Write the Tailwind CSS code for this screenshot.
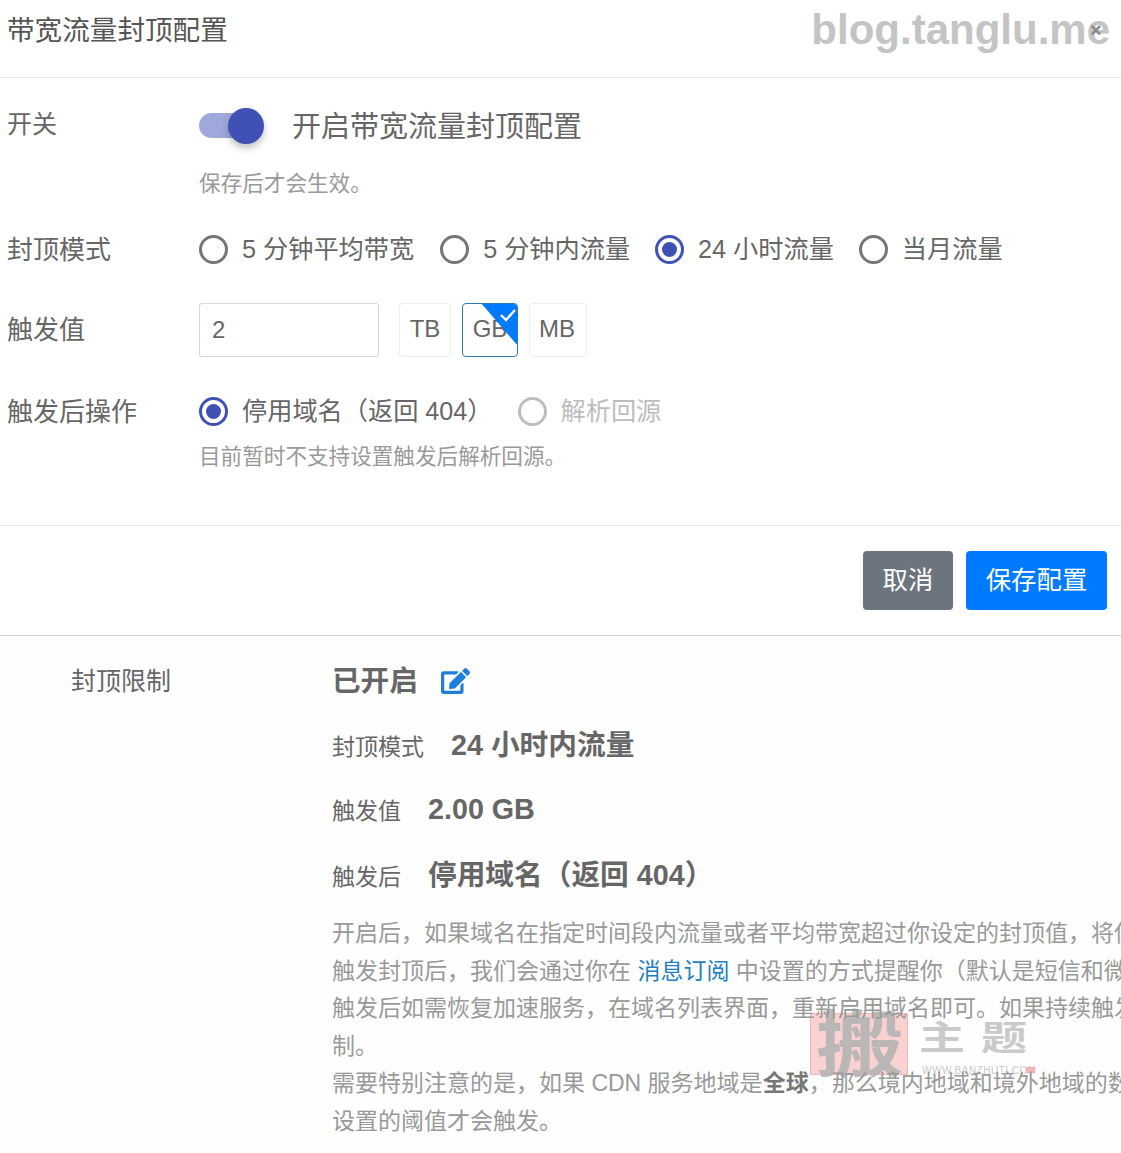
<!DOCTYPE html>
<html lang="zh-CN">
<head>
<meta charset="utf-8">
<script src="https://cdn.jsdelivr.net/npm/@tailwindcss/browser@4"></script>
<title>带宽流量封顶配置</title>
</head>
<body class="bg-white">
<div class="relative w-[1121px] h-[1153px] overflow-hidden bg-[#fefefe] text-[#666] font-['Liberation_Sans','Noto_Sans_CJK_SC',sans-serif]">

  <header class="relative h-[78px] border-b border-[#e6e6e6] flex items-center justify-between pl-[7px] pr-[11px] bg-white">
    <h1 class="text-[27.6px] leading-none text-[#555] pb-[15px] whitespace-nowrap">带宽流量封顶配置</h1>
    <span class="text-[42px] leading-none font-bold text-[#c4c4c4] pb-[17px] whitespace-nowrap">blog.tanglu.me</span>
    <span class="absolute left-[1090px] top-[20px] text-[20px] leading-none font-bold text-[#8a8a8a]">×</span>
  </header>

  <section class="h-[448px] border-b border-[#e6e6e6] bg-white pl-[7px] pt-[21px]">
    <div class="flex items-center h-[54px]">
      <label class="w-[192px] text-[25px] pb-[3px]">开关</label>
      <span class="relative block w-[65px] h-[36px]">
        <span class="absolute left-0 top-[5px] w-[58px] h-[25px] rounded-full bg-[#9fa8da]"></span>
        <span class="absolute left-[29px] top-0 w-[36px] h-[36px] rounded-full bg-[#3f51b5] shadow-[0_4px_7px_rgba(0,0,0,0.25)]"></span>
      </span>
      <span class="ml-[28px] text-[29px] leading-none pt-[2px]">开启带宽流量封顶配置</span>
    </div>
    <p class="ml-[192px] mt-[16px] text-[21.6px] leading-[30px] text-[#999] whitespace-nowrap">保存后才会生效。</p>

    <div class="flex items-center h-[40px] mt-[31px]">
      <label class="w-[192px] text-[26px]">封顶模式</label>
      <div class="flex items-center text-[25.2px] whitespace-nowrap">
        <span class="w-[29px] h-[29px] rounded-full border-[3px] border-[#757575]"></span>
        <span class="ml-[14px] mr-[26px]">5 分钟平均带宽</span>
        <span class="w-[29px] h-[29px] rounded-full border-[3px] border-[#757575]"></span>
        <span class="ml-[14px] mr-[25px]">5 分钟内流量</span>
        <span class="w-[29px] h-[29px] rounded-full border-[3px] border-[#3f51b5] flex items-center justify-center"><span class="w-[15px] h-[15px] rounded-full bg-[#3f51b5]"></span></span>
        <span class="ml-[14px] mr-[25px]">24 小时流量</span>
        <span class="w-[29px] h-[29px] rounded-full border-[3px] border-[#757575]"></span>
        <span class="ml-[14px]">当月流量</span>
      </div>
    </div>

    <div class="flex items-center h-[54px] mt-[33px]">
      <label class="w-[192px] text-[26px]">触发值</label>
      <div class="flex items-center text-[24px]">
        <div class="w-[180px] h-[54px] border border-[#d6d6d6] rounded-[3px] pl-[12px] flex items-center bg-white">2</div>
        <div class="ml-[20px] w-[52px] h-[54px] border border-[#eeeeee] rounded-[4px] flex items-center justify-center pb-[2px]">TB</div>
        <div class="relative ml-[11px] w-[56px] h-[54px] border border-[#2b79b5] rounded-[4px] flex items-center justify-center overflow-hidden pb-[2px]">GB
          <svg class="absolute -right-px -top-px" width="37" height="43" viewBox="0 0 37 43"><polygon points="0,0 37,0 37,43" fill="#007bff"/><path d="M20 12l5 5 9-10" fill="none" stroke="#fff" stroke-width="2.4"/></svg>
        </div>
        <div class="ml-[11px] w-[58px] h-[54px] border border-[#eeeeee] rounded-[4px] flex items-center justify-center pb-[2px] pr-[2px]">MB</div>
      </div>
    </div>

    <div class="flex items-center h-[40px] mt-[35px]">
      <label class="w-[192px] text-[26px]">触发后操作</label>
      <div class="flex items-center text-[25.2px] whitespace-nowrap">
        <span class="w-[29px] h-[29px] rounded-full border-[3px] border-[#3f51b5] flex items-center justify-center"><span class="w-[15px] h-[15px] rounded-full bg-[#3f51b5]"></span></span>
        <span class="ml-[14px] mr-[25px]">停用域名（返回 404）</span>
        <span class="w-[29px] h-[29px] rounded-full border-[3px] border-[#bdbdbd]"></span>
        <span class="ml-[14px] text-[#bdbdbd]">解析回源</span>
      </div>
    </div>
    <p class="ml-[192px] mt-[10px] text-[21.6px] leading-[30px] text-[#999] whitespace-nowrap">目前暂时不支持设置触发后解析回源。</p>
  </section>

  <div class="h-[110px] border-b border-[#cfcfcf] bg-white flex items-center justify-end gap-[13px] pr-[14px] pb-[1px] text-white text-[25.4px]">
    <button class="w-[90px] h-[59px] rounded-[4px] bg-[#6c757d]">取消</button>
    <button class="w-[141px] h-[59px] rounded-[4px] bg-[#007bff]">保存配置</button>
  </div>

  <section class="relative z-10 flex pt-[26px]">
    <div class="w-[332px] pl-[71px] text-[25px] leading-[38px] shrink-0 whitespace-nowrap">封顶限制</div>
    <div class="min-w-0 flex-1">
      <div class="flex items-center h-[38px]">
        <strong class="text-[28.6px] font-bold">已开启</strong>
        <svg class="ml-[23px]" width="29" height="26" viewBox="0 0 576 512" fill="#1e7fd8"><path d="M402.6 83.2l90.2 90.2c3.8 3.8 3.8 10 0 13.8L274.4 405.6l-92.8 10.3c-12.4 1.4-22.9-9.1-21.5-21.5l10.3-92.8L388.8 83.2c3.8-3.8 10-3.8 13.8 0zm162-22.9l-48.8-48.8c-15.2-15.2-39.9-15.2-55.2 0l-35.4 35.4c-3.8 3.8-3.8 10 0 13.8l90.2 90.2c3.8 3.8 10 3.8 13.8 0l35.4-35.4c15.2-15.3 15.2-40 0-55.2zM384 346.2V448H64V128h229.8c3.2 0 6.2-1.3 8.5-3.5l40-40c7.6-7.6 2.2-20.5-8.5-20.5H48C21.5 64 0 85.5 0 112v352c0 26.5 21.5 48 48 48h352c26.5 0 48-21.5 48-48V306.2c0-10.7-12.9-16-20.5-8.5l-40 40c-2.2 2.3-3.5 5.3-3.5 8.5z"/></svg>
      </div>
      <div class="flex items-center h-[38px] mt-[27px] whitespace-nowrap">
        <span class="text-[23px] w-[119px] pt-[2px]">封顶模式</span>
        <strong class="text-[28.7px] font-bold">24 小时内流量</strong>
      </div>
      <div class="flex items-center h-[38px] mt-[26px] whitespace-nowrap">
        <span class="text-[23px] w-[96px] pt-[3px]">触发值</span>
        <strong class="text-[28.7px] font-bold">2.00 GB</strong>
      </div>
      <div class="flex items-center h-[38px] mt-[28px] whitespace-nowrap">
        <span class="text-[23px] w-[96px] pt-[3px]">触发后</span>
        <strong class="text-[28.7px] font-bold">停用域名（返回 404）</strong>
      </div>
      <div class="mt-[20px] text-[23px] leading-[37.5px] text-[#999] whitespace-nowrap overflow-hidden">
        <p>开启后，如果域名在指定时间段内流量或者平均带宽超过你设定的封顶值，将使</p>
        <p>触发封顶后，我们会通过你在 <a class="text-[#1f7fc4]">消息订阅</a> 中设置的方式提醒你（默认是短信和微信</p>
        <p>触发后如需恢复加速服务，在域名列表界面，重新启用域名即可。如果持续触发</p>
        <p>制。</p>
        <p>需要特别注意的是，如果 CDN 服务地域是<strong class="font-bold text-[#777]">全球</strong>，那么境内地域和境外地域的数</p>
        <p>设置的阈值才会触发。</p>
      </div>
    </div>
  </section>

  <div class="absolute left-[810px] top-[1013px] w-[98px] h-[62px] bg-[#f9c6c6]/80 border border-[#f3b5b5]"></div>
  <div class="absolute left-[808px] top-[1010px] w-[104px] text-center text-[88px] leading-none font-bold text-[#b4b4b4]/90 scale-y-[0.82] origin-top">搬</div>
  <div class="absolute left-[919px] top-[1021px] text-[46px] leading-none font-bold tracking-[16px] text-[#cacaca] whitespace-nowrap scale-y-[0.75] origin-top">主题</div>
  <div class="absolute left-[922px] top-[1066px] text-[10px] leading-none tracking-[0.5px] text-[#c8c8c8] whitespace-nowrap">WWW.BANZHUTI.COM</div>
  <div class="absolute left-[1026px] top-[1067px] w-[9px] h-[6px] bg-[#f3b5b5]"></div>
</div>
</body>
</html>
